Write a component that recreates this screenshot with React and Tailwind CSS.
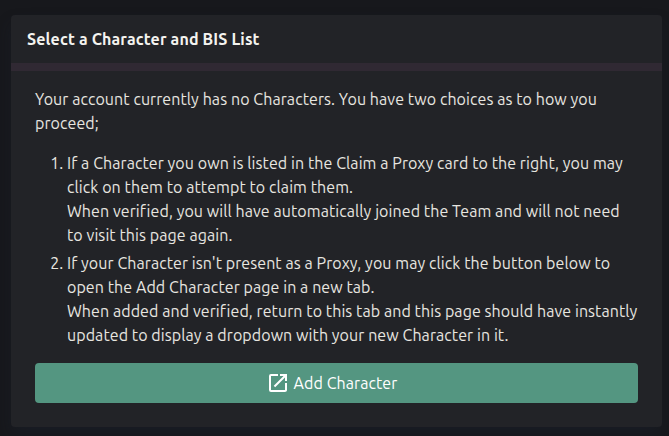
const choices = [
  [
    'If a Character you own is listed in the Claim a Proxy card to the right, you may click on them to attempt to claim them.',
    'When verified, you will have automatically joined the Team and will not need to visit this page again.',
  ],
  [
    "If your Character isn't present as a Proxy, you may click the button below to open the Add Character page in a new tab.",
    'When added and verified, return to this tab and this page should have instantly updated to display a dropdown with your new Character in it.',
  ],
];

function OpenInNewIcon() {
  return (
    <svg className="size-6 shrink-0" viewBox="0 0 24 24" fill="currentColor" aria-hidden="true">
      <path d="M19 19H5V5h7V3H5a2 2 0 0 0-2 2v14a2 2 0 0 0 2 2h14c1.1 0 2-.9 2-2v-7h-2v7zM14 3v2h3.59l-9.83 9.83 1.41 1.41L19 6.41V10h2V3h-7z" />
    </svg>
  );
}

export default function App() {
  return (
    <div className="h-screen overflow-hidden bg-[#17181c] pt-[15px] pr-[7px] pl-[11px] font-['Ubuntu','Noto_Sans',sans-serif] text-base leading-6 tracking-[0.077px] text-[#e8e6e0]">
      <section className="h-[412px] overflow-hidden rounded bg-[#222327] shadow-[0_8px_16px_-2px_rgba(27,35,50,0.4)]">
        <header className="flex h-12 items-center px-4 font-bold tracking-[0.14px] text-[#f4f3ef]">
          <h1>Select a Character and BIS List</h1>
        </header>
        <div className="h-2 bg-[#302933]" />
        <div className="px-6 pt-4">
          <p>Your account currently has no Characters. You have two choices as to how you proceed;</p>
          <ol className="mt-4 -mr-1 ml-8 list-outside list-decimal space-y-1">
            {choices.map(([condition, outcome], i) => (
              <li key={condition} className={i === 0 ? 'pr-3' : ''}>
                {condition}
                <br />
                {outcome}
              </li>
            ))}
          </ol>
          <button className="mt-4 flex h-10 w-full items-center justify-center gap-1 rounded bg-[#549681] pr-[10px] text-white">
            <OpenInNewIcon />
            <span>Add Character</span>
          </button>
        </div>
      </section>
    </div>
  );
}
